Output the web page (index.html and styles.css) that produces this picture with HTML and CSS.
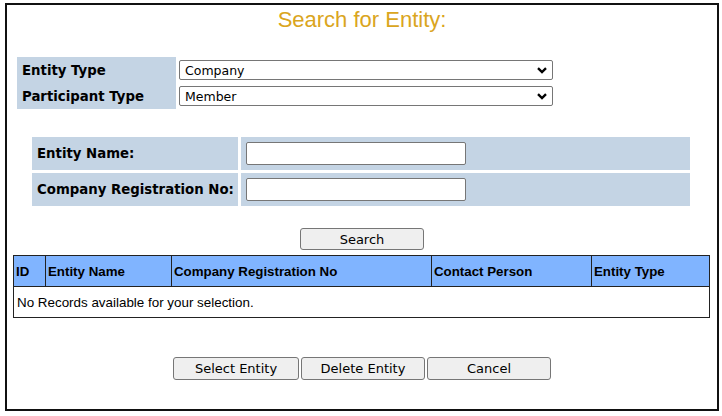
FILE: index.html
```html
<!DOCTYPE html>
<html lang="en">
<head>
    <meta charset="UTF-8">
    <meta name="viewport" content="width=device-width, initial-scale=1.0">
    <title>Search for Entity</title>
    <link rel="stylesheet" href="styles.css">
</head>
<body>
    <div class="frame">
        <h1 class="title">Search for Entity:</h1>

        <!-- type filters -->
        <div class="type-form">
            <label class="type-label" for="entity-type">Entity Type</label>
            <div class="type-field">
                <select id="entity-type">
                    <option>Company</option>
                    <option>Individual</option>
                </select>
                <svg class="chevron" width="10" height="7" viewBox="0 0 10 7"><path d="M1 1.2 L5 5 L9 1.2" fill="none" stroke="#000" stroke-width="2.4"/></svg>
            </div>
            <label class="type-label" for="participant-type">Participant Type</label>
            <div class="type-field">
                <select id="participant-type">
                    <option>Member</option>
                    <option>Non-Member</option>
                </select>
                <svg class="chevron" width="10" height="7" viewBox="0 0 10 7"><path d="M1 1.2 L5 5 L9 1.2" fill="none" stroke="#000" stroke-width="2.4"/></svg>
            </div>
        </div>

        <!-- search criteria -->
        <div class="search-form">
            <label class="search-label" for="entity-name">Entity Name:</label>
            <div class="search-field"><input type="text" id="entity-name"></div>
            <label class="search-label" for="reg-no">Company Registration No:</label>
            <div class="search-field"><input type="text" id="reg-no"></div>
        </div>

        <div class="search-row">
            <button type="button" class="btn btn-search">Search</button>
        </div>

        <table class="results">
            <thead>
                <tr>
                    <th class="col-id">ID</th>
                    <th class="col-name">Entity Name</th>
                    <th class="col-reg">Company Registration No</th>
                    <th class="col-contact">Contact Person</th>
                    <th class="col-type">Entity Type</th>
                </tr>
            </thead>
            <tbody>
                <tr>
                    <td colspan="5">No Records available for your selection.</td>
                </tr>
            </tbody>
        </table>

        <div class="actions">
            <button type="button" class="btn btn-select">Select Entity</button>
            <button type="button" class="btn">Delete Entity</button>
            <button type="button" class="btn">Cancel</button>
        </div>
    </div>
</body>
</html>
```

FILE: styles.css
```css
body {
    margin: 0;
    background-color: #ffffff;
    font-family: 'DejaVu Sans', Verdana, sans-serif;
    color: #000000;
}
.frame {
    margin: 3px 0 0 5px;
    width: 710px;
    height: 404px;
    border: 2px solid #111111;
}
.title {
    margin: 2px 0 0;
    font-family: 'Liberation Sans', Arial, sans-serif;
    font-size: 22px;
    font-weight: normal;
    line-height: 26px;
    text-align: center;
    color: #daa520;
}
.type-form {
    margin: 24px 0 0 10px;
    display: grid;
    grid-template-columns: 159px 374px;
    grid-auto-rows: 26px;
    column-gap: 3px;
}
.type-label {
    background-color: #c4d4e4;
    padding-left: 5px;
    font-size: 13.3px;
    font-weight: bold;
    line-height: 27px;
}
.type-field {
    position: relative;
    display: flex;
    align-items: center;
}
select {
    appearance: none;
    width: 374px;
    height: 20px;
    padding: 0 0 0 5px;
    border: 1px solid #767676;
    border-radius: 2px;
    background-color: #ffffff;
    font-family: 'DejaVu Sans', Verdana, sans-serif;
    font-size: 12.5px;
    color: #000000;
}
.chevron {
    position: absolute;
    right: 6px;
    top: 10px;
    pointer-events: none;
}
.search-form {
    margin: 28px 0 0 25px;
    display: grid;
    grid-template-columns: 206px 449px;
    grid-auto-rows: 33px;
    gap: 3px;
}
.search-label {
    background-color: #c4d4e4;
    padding-left: 5px;
    font-size: 13.3px;
    font-weight: bold;
    line-height: 34px;
}
.search-field {
    background-color: #c4d4e4;
    padding-left: 5px;
    display: flex;
    align-items: center;
}
input[type="text"] {
    box-sizing: border-box;
    width: 220px;
    height: 23px;
    border: 1px solid #767676;
    border-radius: 2px;
    margin: 0;
}
.search-row {
    margin-top: 22px;
    display: flex;
    justify-content: center;
}
.btn {
    box-sizing: border-box;
    width: 124px;
    height: 23px;
    padding: 0;
    background-color: #efefef;
    border: 1px solid #767676;
    border-radius: 3px;
    font-family: 'DejaVu Sans', Verdana, sans-serif;
    font-size: 13px;
    color: #000000;
}
.btn-search {
    height: 22px;
}
.btn-select {
    width: 126px;
}
.results {
    margin: 5px 0 0 6px;
    width: 697px;
    border-collapse: collapse;
    border: 1px solid #222222;
    font-family: 'Liberation Sans', Arial, sans-serif;
}
.results th {
    height: 30px;
    padding: 0 0 0 2px;
    background-color: #80b4ff;
    border: 1px solid #222222;
    font-size: 13.3px;
    text-align: left;
}
.results td {
    height: 30px;
    padding: 0 0 0 3px;
    font-size: 13.4px;
}
.col-id { width: 29px; }
.col-name { width: 123px; }
.col-reg { width: 257px; }
.col-contact { width: 157px; }
.actions {
    margin-top: 39px;
    display: flex;
    justify-content: center;
    gap: 2px;
}
```
